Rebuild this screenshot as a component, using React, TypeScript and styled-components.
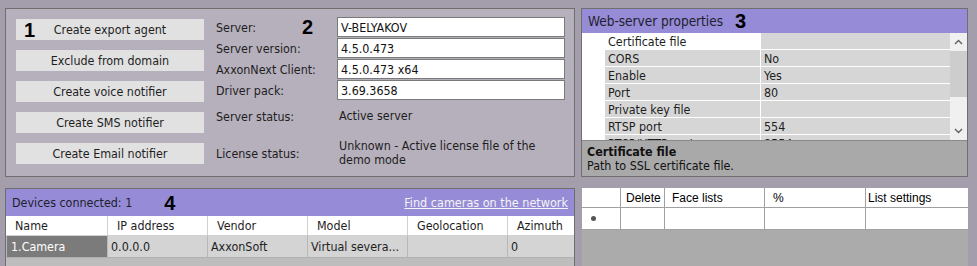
import styled, { createGlobalStyle } from 'styled-components'

const UI_FONT = `"DejaVu Sans Condensed", "DejaVu Sans", sans-serif`
const GRID_FONT = `"Liberation Sans", Arial, sans-serif`

const GlobalStyle = createGlobalStyle`
    html, body {
        margin: 0;
        padding: 0;
    }
    body {
        width: 977px;
        height: 266px;
        overflow: hidden;
        background: #a49dab;
        font-family: ${UI_FONT};
        font-size: 12.4px;
        color: #1e1e1e;
    }
`

const Page = styled.div`
    display: grid;
    grid-template-columns: 570px 387px;
    grid-template-rows: 169px 1fr;
    column-gap: 6px;
    row-gap: 11px;
    padding: 8px 0 0 5px;
    height: 266px;
    box-sizing: border-box;
`

/* ---------- panel 1 + 2 ---------- */

const ServerPanel = styled.div`
    display: flex;
    box-sizing: border-box;
    border: 1px solid #6f6f6f;
    background: #b6b0bc;
    padding: 10px 9px 0 10px;
`

const ButtonColumn = styled.div`
    display: flex;
    flex-direction: column;
    gap: 10px;
    width: 188px;
`

const ActionButton = styled.div`
    position: relative;
    height: 21px;
    display: flex;
    align-items: center;
    justify-content: center;
    background: #e1e1e1;
    color: #1e1e1e;
    cursor: default;
`

const Marker = styled.span<{ $offset?: number }>`
    font-family: "Liberation Sans", Arial, sans-serif;
    font-weight: bold;
    font-size: 20px;
    line-height: 20px;
    color: #000;
    margin-left: ${p => p.$offset ?? 0}px;
`

const ButtonMarker = styled(Marker)`
    position: absolute;
    left: 8px;
    top: 1px;
`

const InfoMarker = styled(Marker)`
    position: absolute;
    left: 86px;
    top: 0px;
`

const InfoColumn = styled.div`
    position: relative;
    display: flex;
    flex-direction: column;
    margin: -2px 0 0 12px;
    flex: 1;
`

const InfoRow = styled.div<{ $height: number; $gap: number }>`
    display: flex;
    align-items: center;
    height: ${p => p.$height}px;
    margin-top: ${p => p.$gap}px;
`

const InfoLabel = styled.div`
    width: 121px;
    flex-shrink: 0;
`

const FieldBox = styled.div`
    box-sizing: border-box;
    width: 228px;
    height: 20px;
    border: 1px solid #7a7a7a;
    background: #fff;
    padding-left: 3px;
    display: flex;
    align-items: center;
    color: #111;
`

const StatusText = styled.div`
    margin-left: 2px;
    line-height: 14px;
`

/* ---------- panel 3 ---------- */

const PropsPanel = styled.div`
    display: flex;
    flex-direction: column;
    box-sizing: border-box;
    border: 1px solid #6f6f6f;
    background: #a9a9a9;
`

const PurpleHeader = styled.div<{ $height: number }>`
    display: flex;
    align-items: center;
    height: ${p => p.$height}px;
    flex-shrink: 0;
    background: #958bd6;
    padding: 0 6px;
    gap: 12px;
`

const HeaderTitle = styled.span<{ $size: number }>`
    font-size: ${p => p.$size}px;
    color: #1e1e2e;
`

const GridArea = styled.div`
    display: flex;
    height: 107px;
    background: #fff;
    overflow: hidden;
    flex-shrink: 0;
`

const PropRows = styled.div`
    flex: 1;
    display: flex;
    flex-direction: column;
`

const PropRow = styled.div`
    display: grid;
    grid-template-columns: 22px 156px 1fr;
    height: 16px;
    flex-shrink: 0;
    border-bottom: 1px solid #fff;
`

const PropCell = styled.div<{ $light?: boolean }>`
    display: flex;
    align-items: center;
    padding-left: 3px;
    background: ${p => (p.$light ? '#fff' : '#d6d6d6')};
    border-left: 1px solid #fff;
    white-space: nowrap;
    overflow: hidden;
`

const Gutter = styled.div`
    background: #fff;
`

const ScrollTrack = styled.div`
    width: 17px;
    flex-shrink: 0;
    display: flex;
    flex-direction: column;
    align-items: center;
    background: #f0f0f0;
`

const ScrollArrow = styled.div`
    height: 18px;
    display: flex;
    align-items: center;
    justify-content: center;
`

const ScrollThumb = styled.div`
    width: 17px;
    height: 46px;
    background: #cdcdcd;
`

const Description = styled.div`
    flex: 1;
    border-top: 1px solid #8a8a8a;
    padding: 4px 5px 0;
    line-height: 14px;
    color: #111;
`

const DescTitle = styled.div`
    font-weight: bold;
`

/* ---------- panel 4 ---------- */

const DevicesPanel = styled.div`
    display: flex;
    flex-direction: column;
    box-sizing: border-box;
    border: 1px solid #6f6f6f;
    border-bottom: none;
    background: #bdbdbd;
`

const HeaderSpacer = styled.div`
    flex: 1;
`

const FindLink = styled.span`
    color: #f4f4f4;
    text-decoration: underline;
    font-size: 12.5px;
`

const DeviceTable = styled.div`
    display: grid;
    grid-template-columns: 101px 100px 100px 100px 100px 1fr;
`

const DeviceHead = styled.div`
    height: 19px;
    display: flex;
    align-items: center;
    padding-left: 9px;
    background: #fff;
    border-left: 1px solid #d0d0d0;
    border-bottom: 1px solid #d0d0d0;
    &:first-child {
        border-left: none;
    }
`

const DeviceCell = styled.div<{ $selected?: boolean }>`
    height: 21px;
    display: flex;
    align-items: center;
    padding-left: ${p => (p.$selected ? 4 : 3)}px;
    background: ${p => (p.$selected ? '#7b7b7b' : '#d4d4d4')};
    color: ${p => (p.$selected ? '#fff' : '#1e1e1e')};
    border-left: 1px solid #b8b8b8;
    border-bottom: 1px solid #b0b0b0;
    white-space: nowrap;
    overflow: hidden;
`

/* ---------- face lists grid ---------- */

const FaceGrid = styled.div`
    margin-left: 1px;
    background: #ababab;
    font-family: ${GRID_FONT};
    font-size: 12px;
    color: #000;
`

const FaceTable = styled.div`
    display: grid;
    grid-template-columns: 39px 44px 100px 101px 1fr;
`

const FaceCell = styled.div<{ $height: number; $pad?: number }>`
    box-sizing: border-box;
    height: ${p => p.$height}px;
    display: flex;
    align-items: center;
    padding-left: ${p => p.$pad ?? 3}px;
    background: #fff;
    border-right: 1px solid #a0a0a0;
    border-bottom: 1px solid #a0a0a0;
    &:nth-child(5n) {
        border-right: none;
    }
`

const RowDot = styled.span`
    width: 5px;
    height: 5px;
    border-radius: 50%;
    background: #555;
    margin-left: 6px;
`

const properties: [string, string][] = [
    ['Certificate file', ''],
    ['CORS', 'No'],
    ['Enable', 'Yes'],
    ['Port', '80'],
    ['Private key file', ''],
    ['RTSP port', '554'],
    ['RTSP/HTTP port', '8554'],
]

const actions = [
    'Create export agent',
    'Exclude from domain',
    'Create voice notifier',
    'Create SMS notifier',
    'Create Email notifier',
]

const fields: [string, string][] = [
    ['Server:', 'V-BELYAKOV'],
    ['Server version:', '4.5.0.473'],
    ['AxxonNext Client:', '4.5.0.473 x64'],
    ['Driver pack:', '3.69.3658'],
]

const deviceColumns = ['Name', 'IP address', 'Vendor', 'Model', 'Geolocation', 'Azimuth']
const deviceRow = ['1.Camera', '0.0.0.0', 'AxxonSoft', 'Virtual severa...', '', '0']

// face list columns: title + left padding of the header text
const faceColumns: [string, number][] = [
    ['', 3],
    ['Delete', 5],
    ['Face lists', 7],
    ['%', 8],
    ['List settings', 2],
]

const Chevron = ({ up }: { up?: boolean }) => (
    <svg width="9" height="6" viewBox="0 0 9 6">
        <polyline
            points={up ? '1,5 4.5,1.5 8,5' : '1,1 4.5,4.5 8,1'}
            fill="none"
            stroke="#606060"
            strokeWidth="1.4"
        />
    </svg>
)

export default function App() {
    return (
        <>
            <GlobalStyle />
            <Page>
                <ServerPanel>
                    <ButtonColumn>
                        {actions.map((a, i) => (
                            <ActionButton key={a}>
                                {i === 0 && <ButtonMarker>1</ButtonMarker>}
                                {a}
                            </ActionButton>
                        ))}
                    </ButtonColumn>
                    <InfoColumn>
                        <InfoMarker>2</InfoMarker>
                        {fields.map(([label, value], i) => (
                            <InfoRow key={label} $height={20} $gap={i === 0 ? 0 : 1}>
                                <InfoLabel>{label}</InfoLabel>
                                <FieldBox>{value}</FieldBox>
                            </InfoRow>
                        ))}
                        <InfoRow $height={20} $gap={6}>
                            <InfoLabel>Server status:</InfoLabel>
                            <StatusText>Active server</StatusText>
                        </InfoRow>
                        <InfoRow $height={28} $gap={13}>
                            <InfoLabel>License status:</InfoLabel>
                            <StatusText>
                                Unknown - Active license file of the
                                <br />
                                demo mode
                            </StatusText>
                        </InfoRow>
                    </InfoColumn>
                </ServerPanel>

                <PropsPanel>
                    <PurpleHeader $height={24}>
                        <HeaderTitle $size={13.5}>Web-server properties</HeaderTitle>
                        <Marker>3</Marker>
                    </PurpleHeader>
                    <GridArea>
                        <PropRows>
                            {properties.map(([name, value], i) => (
                                <PropRow key={name}>
                                    <Gutter />
                                    <PropCell $light={i === 0}>{name}</PropCell>
                                    <PropCell>{value}</PropCell>
                                </PropRow>
                            ))}
                        </PropRows>
                        <ScrollTrack>
                            <ScrollArrow>
                                <Chevron up />
                            </ScrollArrow>
                            <ScrollThumb />
                            <HeaderSpacer />
                            <ScrollArrow>
                                <Chevron />
                            </ScrollArrow>
                        </ScrollTrack>
                    </GridArea>
                    <Description>
                        <DescTitle>Certificate file</DescTitle>
                        Path to SSL certificate file.
                    </Description>
                </PropsPanel>

                <DevicesPanel>
                    <PurpleHeader $height={27}>
                        <HeaderTitle $size={12.4}>Devices connected: 1</HeaderTitle>
                        <Marker $offset={20}>4</Marker>
                        <HeaderSpacer />
                        <FindLink>Find cameras on the network</FindLink>
                    </PurpleHeader>
                    <DeviceTable>
                        {deviceColumns.map(c => (
                            <DeviceHead key={c}>{c}</DeviceHead>
                        ))}
                        {deviceRow.map((v, i) => (
                            <DeviceCell key={i} $selected={i === 0}>
                                {v}
                            </DeviceCell>
                        ))}
                    </DeviceTable>
                </DevicesPanel>

                <FaceGrid>
                    <FaceTable>
                        {faceColumns.map(([title, pad], i) => (
                            <FaceCell key={i} $height={20} $pad={pad}>
                                {title}
                            </FaceCell>
                        ))}
                        {faceColumns.map((_, i) => (
                            <FaceCell key={'r' + i} $height={22}>
                                {i === 0 && <RowDot />}
                            </FaceCell>
                        ))}
                    </FaceTable>
                </FaceGrid>
            </Page>
        </>
    )
}
